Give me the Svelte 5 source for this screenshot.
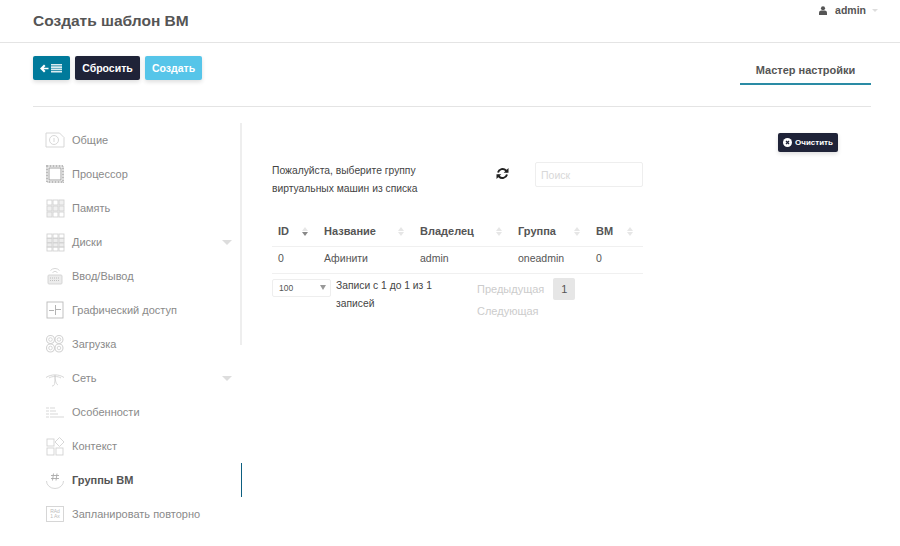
<script lang="ts">
	const items = [
		{ label: 'Общие', icon: 'info' },
		{ label: 'Процессор', icon: 'cpu' },
		{ label: 'Память', icon: 'mem' },
		{ label: 'Диски', icon: 'disk', caret: true },
		{ label: 'Ввод/Вывод', icon: 'io' },
		{ label: 'Графический доступ', icon: 'gfx' },
		{ label: 'Загрузка', icon: 'boot' },
		{ label: 'Сеть', icon: 'net', caret: true },
		{ label: 'Особенности', icon: 'feat' },
		{ label: 'Контекст', icon: 'ctx' },
		{ label: 'Группы ВМ', icon: 'grp', active: true },
		{ label: 'Запланировать повторно', icon: 'sched' }
	];

	const columns = [
		{ name: 'ID', width: 46, sorted: true },
		{ name: 'Название', width: 96 },
		{ name: 'Владелец', width: 98 },
		{ name: 'Группа', width: 78 },
		{ name: 'ВМ', width: 53 }
	];

	const rows = [['0', 'Афинити', 'admin', 'oneadmin', '0']];
</script>

{#snippet icon(name: string)}
	<svg class="nav-icon" width="20" height="20" viewBox="0 0 20 20" fill="none" stroke="#d2d2d2" stroke-width="0.9">
		{#if name === 'info'}
			<path d="M1 3h13.500l4.500 4.500v9.500h-18z" />
			<circle cx="9" cy="10" r="4.500" />
			<path d="M9 8v4" />
		{:else if name === 'cpu'}
			<rect x="2" y="2" width="16" height="16" stroke="#bbb" stroke-width="2" stroke-dasharray="1 .5" />
			<rect x="4" y="4" width="12" height="12" stroke="#999" />
		{:else if name === 'mem'}
			{#each [2, 8, 14] as x}
				{#each [2, 8, 14] as y}
					<rect x={x} y={y} width="5" height="5" fill={x + y === 16 || y === 8 ? '#f0f0f0' : 'none'} />
				{/each}
			{/each}
		{:else if name === 'disk'}
			{#each [2, 8, 14] as x}
				{#each [2, 6.500, 11, 15] as y}
					<rect x={x} y={y} width="5" height="4" fill={y > 5 && y < 12 ? '#ededed' : 'none'} />
				{/each}
			{/each}
		{:else if name === 'io'}
			<path d="M5.500 4.500a6 6 0 0 1 9 0M7.500 6.500a3.500 3.500 0 0 1 5 0" />
			<rect x="3" y="9" width="14" height="9" rx="1" fill="#ececec" />
			<path d="M5 12h10M5 14.500h10" stroke="#bbb" stroke-dasharray="1 1" />
		{:else if name === 'gfx'}
			<rect x="2" y="2" width="16" height="16" stroke="#bbb" />
			<path d="M4 10.500h5M10.500 5v10M11 9.500h5" stroke="#aaa" />
		{:else if name === 'boot'}
			{#each [5.500, 14] as x}
				{#each [5.500, 14] as y}
					<circle cx={x} cy={y} r="4" stroke-width="1.100" />
					<circle cx={x} cy={y} r="1.800" />
				{/each}
			{/each}
		{:else if name === 'net'}
			<path d="M1 9.500c5-3.500 13-3.500 18 0M4 10c3-2 9-2 12 0M7 18c3 0 3-3 3-11 0 5 1 9 3 10" />
		{:else if name === 'feat'}
			<path d="M5 6h5M5 9h6M5 12h8M5 15h14" />
			<path d="M1 6h3M1 9h3M1 12h3M1 15h3" />
		{:else if name === 'ctx'}
			<rect x="2" y="3" width="7" height="7" />
			<path d="M14.500 1.500l4.500 4.500-4.500 4.500-4.500-4.500z" />
			<rect x="2" y="12" width="7" height="7" />
			<rect x="11" y="12" width="7" height="7" />
		{:else if name === 'grp'}
			<path d="M1.500 11a8.500 7.500 0 0 0 17 0" />
			<path d="M8.500 3.500l-1 7M12 3.500l-1 7M6 5.500h8M6 8.500h8" stroke="#aaa" />
		{:else}
			<rect x="1.500" y="2.500" width="17" height="15" />
			<text x="10" y="8.500" class="tiny">RAd</text>
			<text x="10" y="14" class="tiny">1 Ax</text>
		{/if}
	</svg>
{/snippet}

<div class="page">
	<header class="top">
		<h1>Создать шаблон ВМ</h1>
		<div class="user">
			<svg width="8" height="9" viewBox="0 0 9 10"><circle cx="4.500" cy="2.500" r="2.300" fill="#555" /><path d="M0 10V7.500C0 6 1.500 5 2.500 5h4C7.500 5 9 6 9 7.500V10z" fill="#555" /></svg>
			<span>admin</span>
			<i class="caret small"></i>
		</div>
	</header>

	<div class="toolbar">
		<div class="actions">
			<button class="btn back" aria-label="Назад">
				<svg width="23" height="9" viewBox="0 0 23 9" fill="#fff">
					<path d="M0 4.500l4-4 1.500 1.500-1.800 1.800h4.800v1.400h-4.800l1.800 1.800-1.500 1.500z" />
					<path d="M11 0h11v1.600h-11zM11 2.300h11v1.600h-11zM11 4.600h11v1.600h-11zM11 6.900h11v1.600h-11z" opacity=".85" />
				</svg>
			</button>
			<button class="btn dark">Сбросить</button>
			<button class="btn light">Создать</button>
		</div>
		<div class="tab">Мастер настройки</div>
	</div>

	<div class="wizard">
		<nav class="side">
			{#each items as item}
				<div class="item" class:active={item.active}>
					{@render icon(item.icon)}
					<span>{item.label}</span>
					{#if item.caret}<i class="caret"></i>{/if}
				</div>
			{/each}
		</nav>

		<main class="panel">
			<div class="clear-row">
				<button class="btn dark clear">
					<svg width="9" height="9" viewBox="0 0 9 9"><circle cx="4.500" cy="4.500" r="4.500" fill="#fff" /><path d="M3 3l3 3M6 3l-3 3" stroke="#1f2338" stroke-width="1.300" /></svg>
					Очистить
				</button>
			</div>

			<div class="dt">
				<div class="dt-top">
					<p>Пожалуйста, выберите группу<br />виртуальных машин из списка</p>
					<svg class="refresh" width="13" height="13" viewBox="0 0 13 13" fill="none" stroke="#222" stroke-width="2">
						<path d="M2 5.500a4.700 4.700 0 0 1 8-2l1.200 1.500" />
						<path d="M11 7.500a4.700 4.700 0 0 1-8 2l-1.200-1.500" />
						<path d="M12.500 1v4.800h-4.800z" fill="#222" stroke="none" />
						<path d="M.5 12V7.200h4.800z" fill="#222" stroke="none" />
					</svg>
					<input class="search" placeholder="Поиск" />
				</div>

				<table>
					<thead>
						<tr>
							{#each columns as col}
								<th style="width: {col.width}px">
									{col.name}
									<span class="sort" class:sorted={col.sorted}><b></b><b></b></span>
								</th>
							{/each}
						</tr>
					</thead>
					<tbody>
						{#each rows as row}
							<tr>
								{#each row as cell}<td>{cell}</td>{/each}
							</tr>
						{/each}
					</tbody>
				</table>

				<div class="dt-foot">
					<div class="select">100<i></i></div>
					<div class="info">Записи с 1 до 1 из 1 записей</div>
					<div class="pager">
						<span>Предыдущая</span>
						<em>1</em>
						<span>Следующая</span>
					</div>
				</div>
			</div>
		</main>
	</div>
</div>

<style>
	:global(body) {
		background: #fff;
		font-family: 'Liberation Sans', Arial, sans-serif;
		overflow: hidden;
	}

	.page {
		width: 900px;
		height: 546px;
		overflow: hidden;
		color: #555;
	}

	.top {
		display: flex;
		justify-content: space-between;
		align-items: flex-start;
		box-sizing: border-box;
		border-bottom: 1px solid #e4e4e4;
		padding: 0 22px 0 33px;
		height: 43px;

		h1 {
			margin: 12px 0 0;
			color: #555;
			font-size: 15.500px;
			line-height: 18px;
		}
	}

	.user {
		display: flex;
		align-items: center;
		gap: 8px;
		margin-top: 4px;
		font-size: 10.500px;
		font-weight: bold;
		line-height: 12px;
	}

	.caret {
		display: inline-block;
		border-top: 5px solid #ddd;
		border-right: 5px solid transparent;
		border-left: 5px solid transparent;

		&.small {
			margin-left: -2px;
			border-top-width: 3px;
			border-right-width: 3px;
			border-left-width: 3px;
		}
	}

	.toolbar {
		display: flex;
		justify-content: space-between;
		align-items: flex-start;
		margin: 0 29px 0 33px;
		border-bottom: 1px solid #e4e4e4;
		padding-top: 13px;
		height: 50px;
	}

	.actions {
		display: flex;
		gap: 5px;
	}

	.btn {
		display: flex;
		align-items: center;
		justify-content: center;
		box-shadow: 0 2px 4px #0002;
		border: none;
		border-radius: 2px;
		padding: 0;
		height: 24px;
		color: #fff;
		font-family: inherit;
		font-size: 10.500px;
		font-weight: bold;
	}

	.back {
		background: #007a9b;
		width: 37px;
	}

	.dark {
		background: #1f2338;
		width: 65px;
	}

	.light {
		background: #56c5e9;
		width: 57px;
	}

	.tab {
		box-sizing: border-box;
		margin-top: 1px;
		border-bottom: 2px solid #2a8ba5;
		width: 131px;
		height: 28px;
		color: #555;
		font-size: 11px;
		font-weight: bold;
		line-height: 26px;
		text-align: center;
	}

	.wizard {
		display: flex;
		padding: 16px 0 0 33px;
	}

	.side {
		position: relative;
		flex: none;
		box-sizing: border-box;
		width: 209px;
	}

	.side::after {
		position: absolute;
		top: 0;
		right: 0;
		background: #eee;
		width: 2px;
		height: 222px;
		content: '';
	}

	.item {
		display: flex;
		position: relative;
		align-items: center;
		padding-left: 12px;
		height: 34px;
		color: #8a8a8a;
		font-size: 11px;

		.caret {
			position: absolute;
			right: 10px;
			top: 15px;
		}

		span {
			margin-left: 7px;
		}

		&.active {
			color: #555;
			font-weight: bold;
		}

		&.active::after {
			position: absolute;
			top: 0;
			right: 0;
			z-index: 1;
			background: #0d5f80;
			width: 1.500px;
			height: 34px;
			content: '';
		}
	}

	.nav-icon {
		flex: none;
	}

	.tiny {
		fill: #bbb;
		stroke: none;
		font-size: 5px;
		text-anchor: middle;
	}

	.panel {
		flex: 1;
		padding: 10px 62px 0 30px;
	}

	.clear-row {
		display: flex;
		justify-content: flex-end;
	}

	.clear {
		gap: 3px;
		width: 60px;
		height: 19px;
		font-size: 8px;
	}

	.dt {
		width: 371px;
	}

	.dt-top {
		display: flex;
		align-items: flex-start;
		margin-top: 10px;
		height: 57px;

		p {
			margin: 0;
			width: 224px;
			color: #444;
			font-size: 10.300px;
			line-height: 18px;
		}
	}

	.refresh {
		margin-top: 5px;
	}

	.search {
		box-sizing: border-box;
		margin-left: 26px;
		border: 1px solid #eee;
		border-radius: 2px;
		padding: 0 5px;
		outline: none;
		width: 108px;
		height: 25px;
		font-family: inherit;
		font-size: 10.500px;

		&::placeholder {
			color: #d8d8d8;
		}
	}

	table {
		border-collapse: collapse;
		width: 371px;
		table-layout: fixed;
		font-size: 10.500px;
	}

	th {
		position: relative;
		box-sizing: border-box;
		border-bottom: 1px solid #f0f0f0;
		padding: 0 6px 2px;
		height: 27px;
		color: #555;
		font-size: 11px;
		text-align: left;
	}

	td {
		box-sizing: border-box;
		border-bottom: 1px solid #f0f0f0;
		padding: 0 6px 3px;
		height: 27px;
		color: #555;
	}

	.sort {
		display: flex;
		position: absolute;
		right: 10px;
		top: 8px;
		flex-direction: column;
		gap: 1px;

		b {
			border-right: 3px solid transparent;
			border-bottom: 4px solid #e6e6e6;
			border-left: 3px solid transparent;
		}

		b + b {
			border-top: 4px solid #e6e6e6;
			border-bottom: none;
		}

		&.sorted b + b {
			border-top-color: #888;
		}
	}

	.dt-foot {
		display: flex;
		align-items: flex-start;
		padding-top: 5px;
		font-size: 10.300px;
	}

	.select {
		display: flex;
		flex: none;
		justify-content: space-between;
		align-items: center;
		box-sizing: border-box;
		border: 1px solid #eee;
		border-radius: 2px;
		padding: 0 4px 0 6px;
		width: 59px;
		height: 18px;
		color: #555;
		font-size: 8.500px;

		i {
			border-top: 5px solid #999;
			border-right: 3.500px solid transparent;
			border-left: 3.500px solid transparent;
		}
	}

	.info {
		flex: none;
		margin-top: -2px;
		margin-left: 5px;
		width: 120px;
		color: #444;
		line-height: 18px;
	}

	.pager {
		display: flex;
		flex-wrap: wrap;
		align-items: center;
		margin-top: -1px;
		margin-left: 21px;
		width: 110px;
		color: #ccc;
		font-size: 11px;

		span {
			line-height: 22px;
		}

		em {
			margin-left: 9px;
			border-radius: 2px;
			background: #e6e6e6;
			width: 22px;
			height: 22px;
			color: #555;
			font-style: normal;
			line-height: 22px;
			text-align: center;
		}
	}
</style>
